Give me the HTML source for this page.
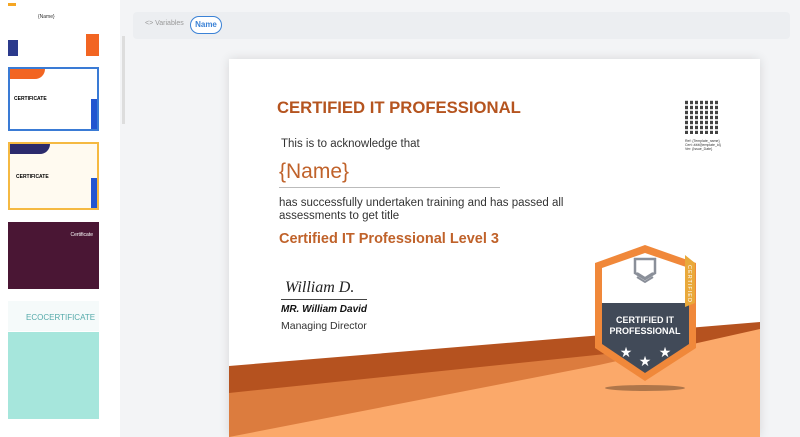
<!DOCTYPE html>
<html><head><meta charset="utf-8"><style>
*{margin:0;padding:0;box-sizing:border-box}
body{width:800px;height:437px;overflow:hidden;background:#f3f4f6;font-family:"Liberation Sans",sans-serif;position:relative}
.left{position:absolute;left:0;top:0;width:120px;height:437px;background:#fff}
.th{position:absolute;left:8px;width:91px}
.abs{position:absolute}
.cert{position:absolute;left:229px;top:59px;width:531px;height:378px;background:#fff;box-shadow:0 0 10px rgba(0,0,0,.12);overflow:hidden}
</style></head><body>
<div class="left">
  <div class="th" style="top:0;height:56px;background:#fff">
    <div class="abs" style="left:0;top:3px;width:8px;height:3px;background:#f5a623"></div>
    <div class="abs" style="left:30px;top:14px;font-size:5px;color:#333">{Name}</div>
    <div class="abs" style="left:0;top:40px;width:10px;height:16px;background:#2b3a8c"></div>
    <div class="abs" style="left:78px;top:34px;width:13px;height:22px;background:#f26522"></div>
  </div>
  <div class="th" style="top:67px;height:64px;background:#fff;border:2px solid #3a7bd5">
    <div class="abs" style="left:0;top:0;width:35px;height:10px;background:#f26522;border-radius:0 0 20px 0"></div>
    <div class="abs" style="right:0;bottom:0;width:6px;height:30px;background:#2255d0"></div>
    <div class="abs" style="left:4px;top:27px;font-size:5px;font-weight:bold">CERTIFICATE</div>
  </div>
  <div class="th" style="top:142px;height:68px;background:#fffaf0;border:2px solid #f5b942">
    <div class="abs" style="left:0;top:0;width:40px;height:10px;background:#2b2a6c;border-radius:0 0 20px 0"></div>
    <div class="abs" style="right:0;bottom:0;width:6px;height:30px;background:#2255d0"></div>
    <div class="abs" style="left:6px;top:30px;font-size:5px;font-weight:bold">CERTIFICATE</div>
  </div>
  <div class="th" style="top:222px;height:67px;background:#4a1634">
    <div class="abs" style="right:6px;top:10px;font-size:5px;color:#fff">Certificate</div>
  </div>
  <div class="th" style="top:301px;height:30px;background:#f5fafa">
    <div class="abs" style="left:18px;top:12px;font-size:8px;color:#5aa">ECOCERTIFICATE</div>
  </div>
  <div class="th" style="top:332px;height:87px;background:#a6e6dc"></div>
</div>
<div class="abs" style="left:122px;top:36px;width:3px;height:88px;background:#ddd"></div>
<div class="abs" style="left:133px;top:12px;width:657px;height:27px;background:#eceef1;border-radius:4px"></div>
<div class="abs" style="left:145px;top:20px;font-size:7px;color:#999">&lt;&gt; Variables</div>
<div class="abs" style="left:190px;top:16px;width:32px;height:18px;border:1.5px solid #3b82d6;border-radius:10px;font-size:8px;font-weight:bold;color:#3b82d6;text-align:center;line-height:15px;background:#fff">Name</div>

<div class="cert">
<svg class="abs" style="left:0;top:0" width="531" height="378">
  <polygon points="0,307 531,263 531,378 0,378" fill="#b5521f"/>
  <polygon points="0,334 531,279 531,378 0,378" fill="#dc7c3e"/>
  <polygon points="0,378 370,306 531,270 531,378" fill="#fba96a"/>
</svg>
<div class="abs" style="left:48px;top:39px;font-size:16.7px;font-weight:bold;color:#b5541f">CERTIFIED IT PROFESSIONAL</div>
<div class="abs" style="left:52px;top:79px;font-size:11.5px;color:#333">This is to acknowledge that</div>
<div class="abs" style="left:50px;top:101px;font-size:21px;color:#c0622a">{Name}</div>
<div class="abs" style="left:50px;top:128px;width:221px;height:1px;background:#bbb"></div>
<div class="abs" style="left:50px;top:138px;font-size:11.5px;color:#333;line-height:13px">has successfully undertaken training and has passed all<br>assessments to get title</div>
<div class="abs" style="left:50px;top:172px;font-size:14.5px;font-weight:bold;color:#c0622a">Certified IT Professional Level 3</div>
<div class="abs" style="left:56px;top:220px;font-size:16px;font-style:italic;font-family:'Liberation Serif',serif;color:#222">William D.</div>
<div class="abs" style="left:52px;top:240px;width:86px;height:1px;background:#444"></div>
<div class="abs" style="left:52px;top:245px;font-size:10px;font-weight:bold;font-style:italic;color:#111">MR. William David</div>
<div class="abs" style="left:52px;top:261px;font-size:10.5px;color:#333">Managing Director</div>
<div class="abs" style="left:456px;top:41px;width:34px;height:34px;background:
 repeating-linear-gradient(90deg,#222 0 3px,#fff 3px 5px),#222;opacity:.85"></div>
<div class="abs" style="left:456px;top:41px;width:34px;height:34px;background:repeating-linear-gradient(0deg,transparent 0 3px,rgba(255,255,255,.8) 3px 5px)"></div>
<div class="abs" style="left:456px;top:80px;font-size:3.5px;color:#333;line-height:4px">Ref: {Template_name}<br>Cert: ###/{template_id}<br>Ver: {Issue_Date}</div>
<svg class="abs" style="left:364px;top:184px" width="110" height="150">
  <ellipse cx="52" cy="145" rx="40" ry="3" fill="rgba(0,0,0,.3)"/>
  <polygon points="52,2 103,20 103,105 52,138 2,105 2,20" fill="#f0883a"/>
  <polygon points="52,10 96,25 96,60 9,60 9,25" fill="#fff"/>
  <polygon points="9,60 96,60 96,101 52,130 9,101" fill="#414a58"/>
  <polygon points="92,12 102,20 102,60 92,64" fill="#e9a93a"/>
  <text transform="translate(95,22) rotate(90)" font-size="5.5" fill="#fff" font-family="Liberation Sans" letter-spacing="1">CERTIFIED</text>
  <path d="M42,16 h20 v14 l-10,6 l-10,-6z" fill="none" stroke="#8a8f99" stroke-width="2.5"/>
  <path d="M44,30 l8,5 l8,-5 M44,34 l8,5 l8,-5" stroke="#8a8f99" stroke-width="2" fill="none"/>
  <text x="52" y="80" font-size="9" fill="#fff" font-weight="bold" font-family="Liberation Sans" text-anchor="middle">CERTIFIED IT</text>
  <text x="52" y="91" font-size="9" fill="#fff" font-weight="bold" font-family="Liberation Sans" text-anchor="middle">PROFESSIONAL</text>
  <text x="33" y="114" font-size="14" fill="#fff" text-anchor="middle">★</text>
  <text x="52" y="123" font-size="14" fill="#fff" text-anchor="middle">★</text>
  <text x="72" y="114" font-size="14" fill="#fff" text-anchor="middle">★</text>
</svg>
</div>
</body></html>
